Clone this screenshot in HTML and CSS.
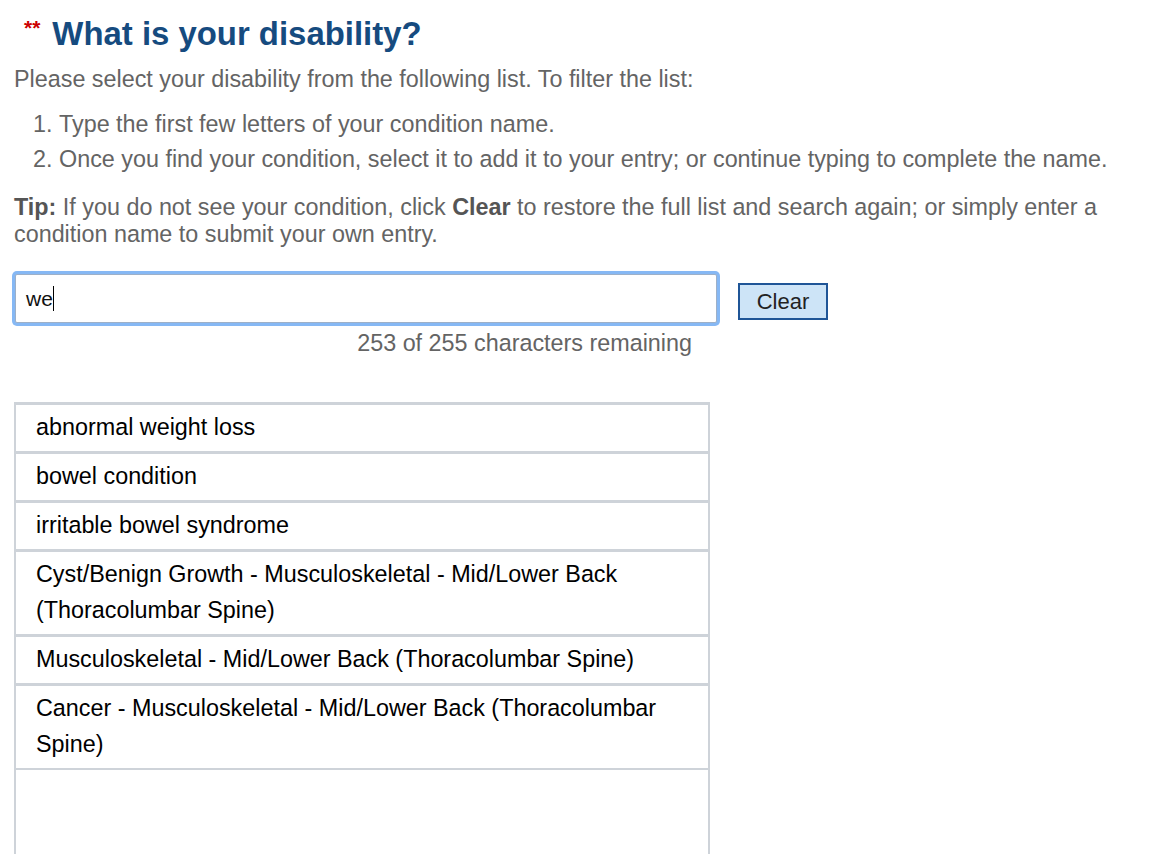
FILE: index.html
```html
<!DOCTYPE html>
<html lang="en">
<head>
<meta charset="utf-8">
<title>What is your disability?</title>
<link rel="stylesheet" href="styles.css">
</head>
<body>
<main class="page">
  <h1 class="title"><span class="req">**</span>What is your disability?</h1>
  <p class="intro">Please select your disability from the following list. To filter the list:</p>
  <ol class="steps">
    <li>Type the first few letters of your condition name.</li>
    <li>Once you find your condition, select it to add it to your entry; or continue typing to complete the name.</li>
  </ol>
  <p class="tip"><b>Tip:</b> If you do not see your condition, click <b>Clear</b> to restore the full list and search again; or simply enter a condition name to submit your own entry.</p>
  <div class="search-row">
    <div class="field">
      <div class="input"><span class="value">we</span><span class="caret"></span></div>
      <div class="counter">253 of 255 characters remaining</div>
    </div>
    <button class="clear" type="button">Clear</button>
  </div>
  <ul class="results">
    <li>abnormal weight loss</li>
    <li>bowel condition</li>
    <li>irritable bowel syndrome</li>
    <li>Cyst/Benign Growth - Musculoskeletal - Mid/Lower Back (Thoracolumbar Spine)</li>
    <li>Musculoskeletal - Mid/Lower Back (Thoracolumbar Spine)</li>
    <li>Cancer - Musculoskeletal - Mid/Lower Back (Thoracolumbar Spine)</li>
  </ul>
</main>
</body>
</html>
```
FILE: styles.css
```css
html, body {
  margin: 0;
  padding: 0;
  background: #fff;
}
body {
  font-family: "Liberation Sans", Arial, Helvetica, sans-serif;
  color: #646464;
  overflow: hidden;
  height: 854px;
}
.page {
  padding: 0 0 0 14px;
}
.title {
  margin: 14px 0 0 0;
  font-size: 32.9px;
  line-height: 40px;
  font-weight: bold;
  color: #164b7f;
  display: flex;
  align-items: flex-start;
}
.req {
  color: #cc0000;
  font-size: 21px;
  line-height: 17px;
  margin: 5px 12px 0 10px;
}
.intro {
  margin: 12px 0 0 0;
  font-size: 23.35px;
  line-height: 26px;
}
.steps {
  margin: 15px 0 0 0;
  padding: 0 0 0 45px;
  font-size: 23.35px;
  line-height: 35px;
}
.tip {
  margin: 17px 0 0 0;
  font-size: 23.35px;
  line-height: 27px;
  width: 1120px;
}
.tip b {
  color: #555;
}
.search-row {
  display: flex;
  align-items: flex-start;
  margin-top: 26px;
}
.field {
  width: 702px;
  margin-left: 1px;
}
.input {
  box-sizing: border-box;
  height: 49px;
  border: 1px solid #9db0c8;
  box-shadow: 0 0 0 3px #86b8f4;
  border-radius: 2px;
  display: flex;
  align-items: center;
  padding-left: 10px;
  font-size: 21px;
  color: #111;
  background: #fff;
}
.caret {
  display: inline-block;
  width: 1.5px;
  height: 25px;
  background: #000;
}
.counter {
  text-align: right;
  padding-right: 25px;
  margin-top: 5px;
  font-size: 23.35px;
  line-height: 30px;
}
.clear {
  margin: 9px 0 0 21px;
  width: 90px;
  height: 37px;
  box-sizing: border-box;
  border: 2px solid #1f5597;
  background: #cde4f7;
  color: #222;
  font-family: "Liberation Sans", Arial, sans-serif;
  font-size: 22px;
  padding: 0;
  border-radius: 0;
}
.results {
  list-style: none;
  margin: 44px 0 0 0;
  padding: 0;
  width: 696px;
  box-sizing: border-box;
  height: 460px;
  border: 2px solid #ced3d9;
  border-top-width: 3px;
  border-bottom: none;
}
.results li {
  font-size: 23.35px;
  line-height: 36px;
  color: #000;
  padding: 4px 20px 6px 20px;
  border-bottom: 3px solid #ced3d9;
  border-left: 1px solid #ced3d9;
  border-right: 1px solid #ced3d9;
  margin: 0 -1px;
}
.results li:last-child {
  border-bottom-width: 2px;
}
```
